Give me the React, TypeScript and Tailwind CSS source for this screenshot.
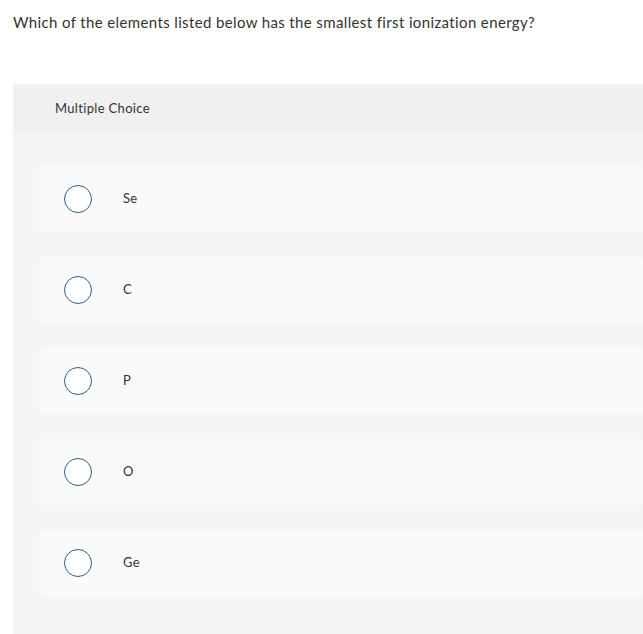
import React from "react";

const options = ["Se", "C", "P", "O", "Ge"];

export default function App() {
  return (
    <div
      className="w-[643px] h-[634px] overflow-hidden bg-white text-[#333]"
      style={{ fontFamily: "Lato, 'Open Sans', Arial, sans-serif", fontVariantLigatures: "none" }}
    >
      <div className="pl-[13px] pt-[12px] h-[84px] text-[15px] leading-[20px] tracking-[0.37px]">
        Which of the elements listed below has the smallest first ionization energy?
      </div>
      <div className="ml-[13px] bg-[#f5f5f5] h-[550px]">
        <div className="h-[49px] bg-[#f0f0f0] flex items-center pl-[42px] text-[13px] tracking-[0.33px]">
          Multiple Choice
        </div>
        <div className="pt-[33px] pl-[26px] flex flex-col gap-[25px]">
          {options.map((o) => (
            <div
              key={o}
              className="h-[66px] bg-[#fafafa] rounded-[3px] flex items-center pl-[25px]"
            >
              <div className="w-[28px] h-[28px] rounded-full border-[1.5px] border-[#2e5f8e] bg-white" />
              <div className="ml-[31px] text-[13px] tracking-[0.3px]">{o}</div>
            </div>
          ))}
        </div>
      </div>
    </div>
  );
}
